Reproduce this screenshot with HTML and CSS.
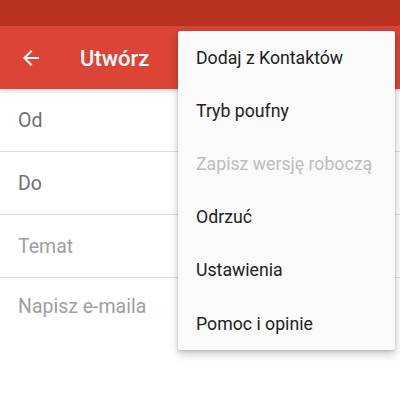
FILE: index.html
```html
<!DOCTYPE html>
<html lang="pl">
<head>
<meta charset="utf-8">
<link rel="stylesheet" href="styles.css">
</head>
<body>
<div class="screen">
  <div class="status"></div>
  <div class="toolbar">
    <svg class="back" width="24" height="24" viewBox="0 0 24 24"><path d="M20 11H7.83l5.59-5.59L12 4l-8 8 8 8 1.41-1.41L7.83 13H20v-2z" fill="#fff"/></svg>
    <span class="title">Utwórz</span>
  </div>
  <div class="fields">
    <div class="field dark">Od</div>
    <div class="field dark">Do</div>
    <div class="field">Temat</div>
    <div class="field body">Napisz e-maila</div>
  </div>
  <div class="menu">
    <div class="item">Dodaj z Kontaktów</div>
    <div class="item">Tryb poufny</div>
    <div class="item disabled">Zapisz wersję roboczą</div>
    <div class="item">Odrzuć</div>
    <div class="item">Ustawienia</div>
    <div class="item">Pomoc i opinie</div>
  </div>
</div>
</body>
</html>
```
FILE: styles.css
```css
html, body {
  margin: 0;
  padding: 0;
  background: #fff;
}
.screen {
  position: relative;
  width: 400px;
  height: 410px;
  overflow: hidden;
  font-family: Roboto, "Noto Sans", sans-serif;
}
.status {
  height: 26px;
  background: #b93221;
}
.toolbar {
  position: relative;
  z-index: 1;
  height: 63px;
  background: #db4437;
  display: flex;
  align-items: center;
  box-shadow: 0 2px 4px rgba(0,0,0,0.18);
}
.back {
  margin-left: 19px;
  margin-top: 1px;
}
.title {
  margin-left: 37px;
  color: #fff;
  font-size: 22px;
  font-weight: 500;
  margin-top: 1px;
}
.fields {
  display: flex;
  flex-direction: column;
}
.field {
  height: 63px;
  box-sizing: border-box;
  border-bottom: 1px solid #dedede;
  display: flex;
  align-items: center;
  padding-left: 18px;
  font-size: 19.5px;
  color: #9e9e9e;
}
.field.dark {
  color: #6f6f6f;
}
.field.body {
  border-bottom: none;
  align-items: flex-start;
  padding-top: 17px;
}
.menu {
  position: absolute;
  left: 178px;
  top: 31px;
  width: 217px;
  height: 319px;
  box-sizing: border-box;
  background: #fafafa;
  border-radius: 2px;
  box-shadow: 0 4px 10px rgba(0,0,0,0.22), 0 1px 3px rgba(0,0,0,0.15);
  z-index: 2;
}
.item {
  height: 53.2px;
  display: flex;
  align-items: center;
  padding-left: 18px;
  font-size: 17.7px;
  color: #212121;
}
.item.disabled {
  color: #bdbdbd;
}
```
